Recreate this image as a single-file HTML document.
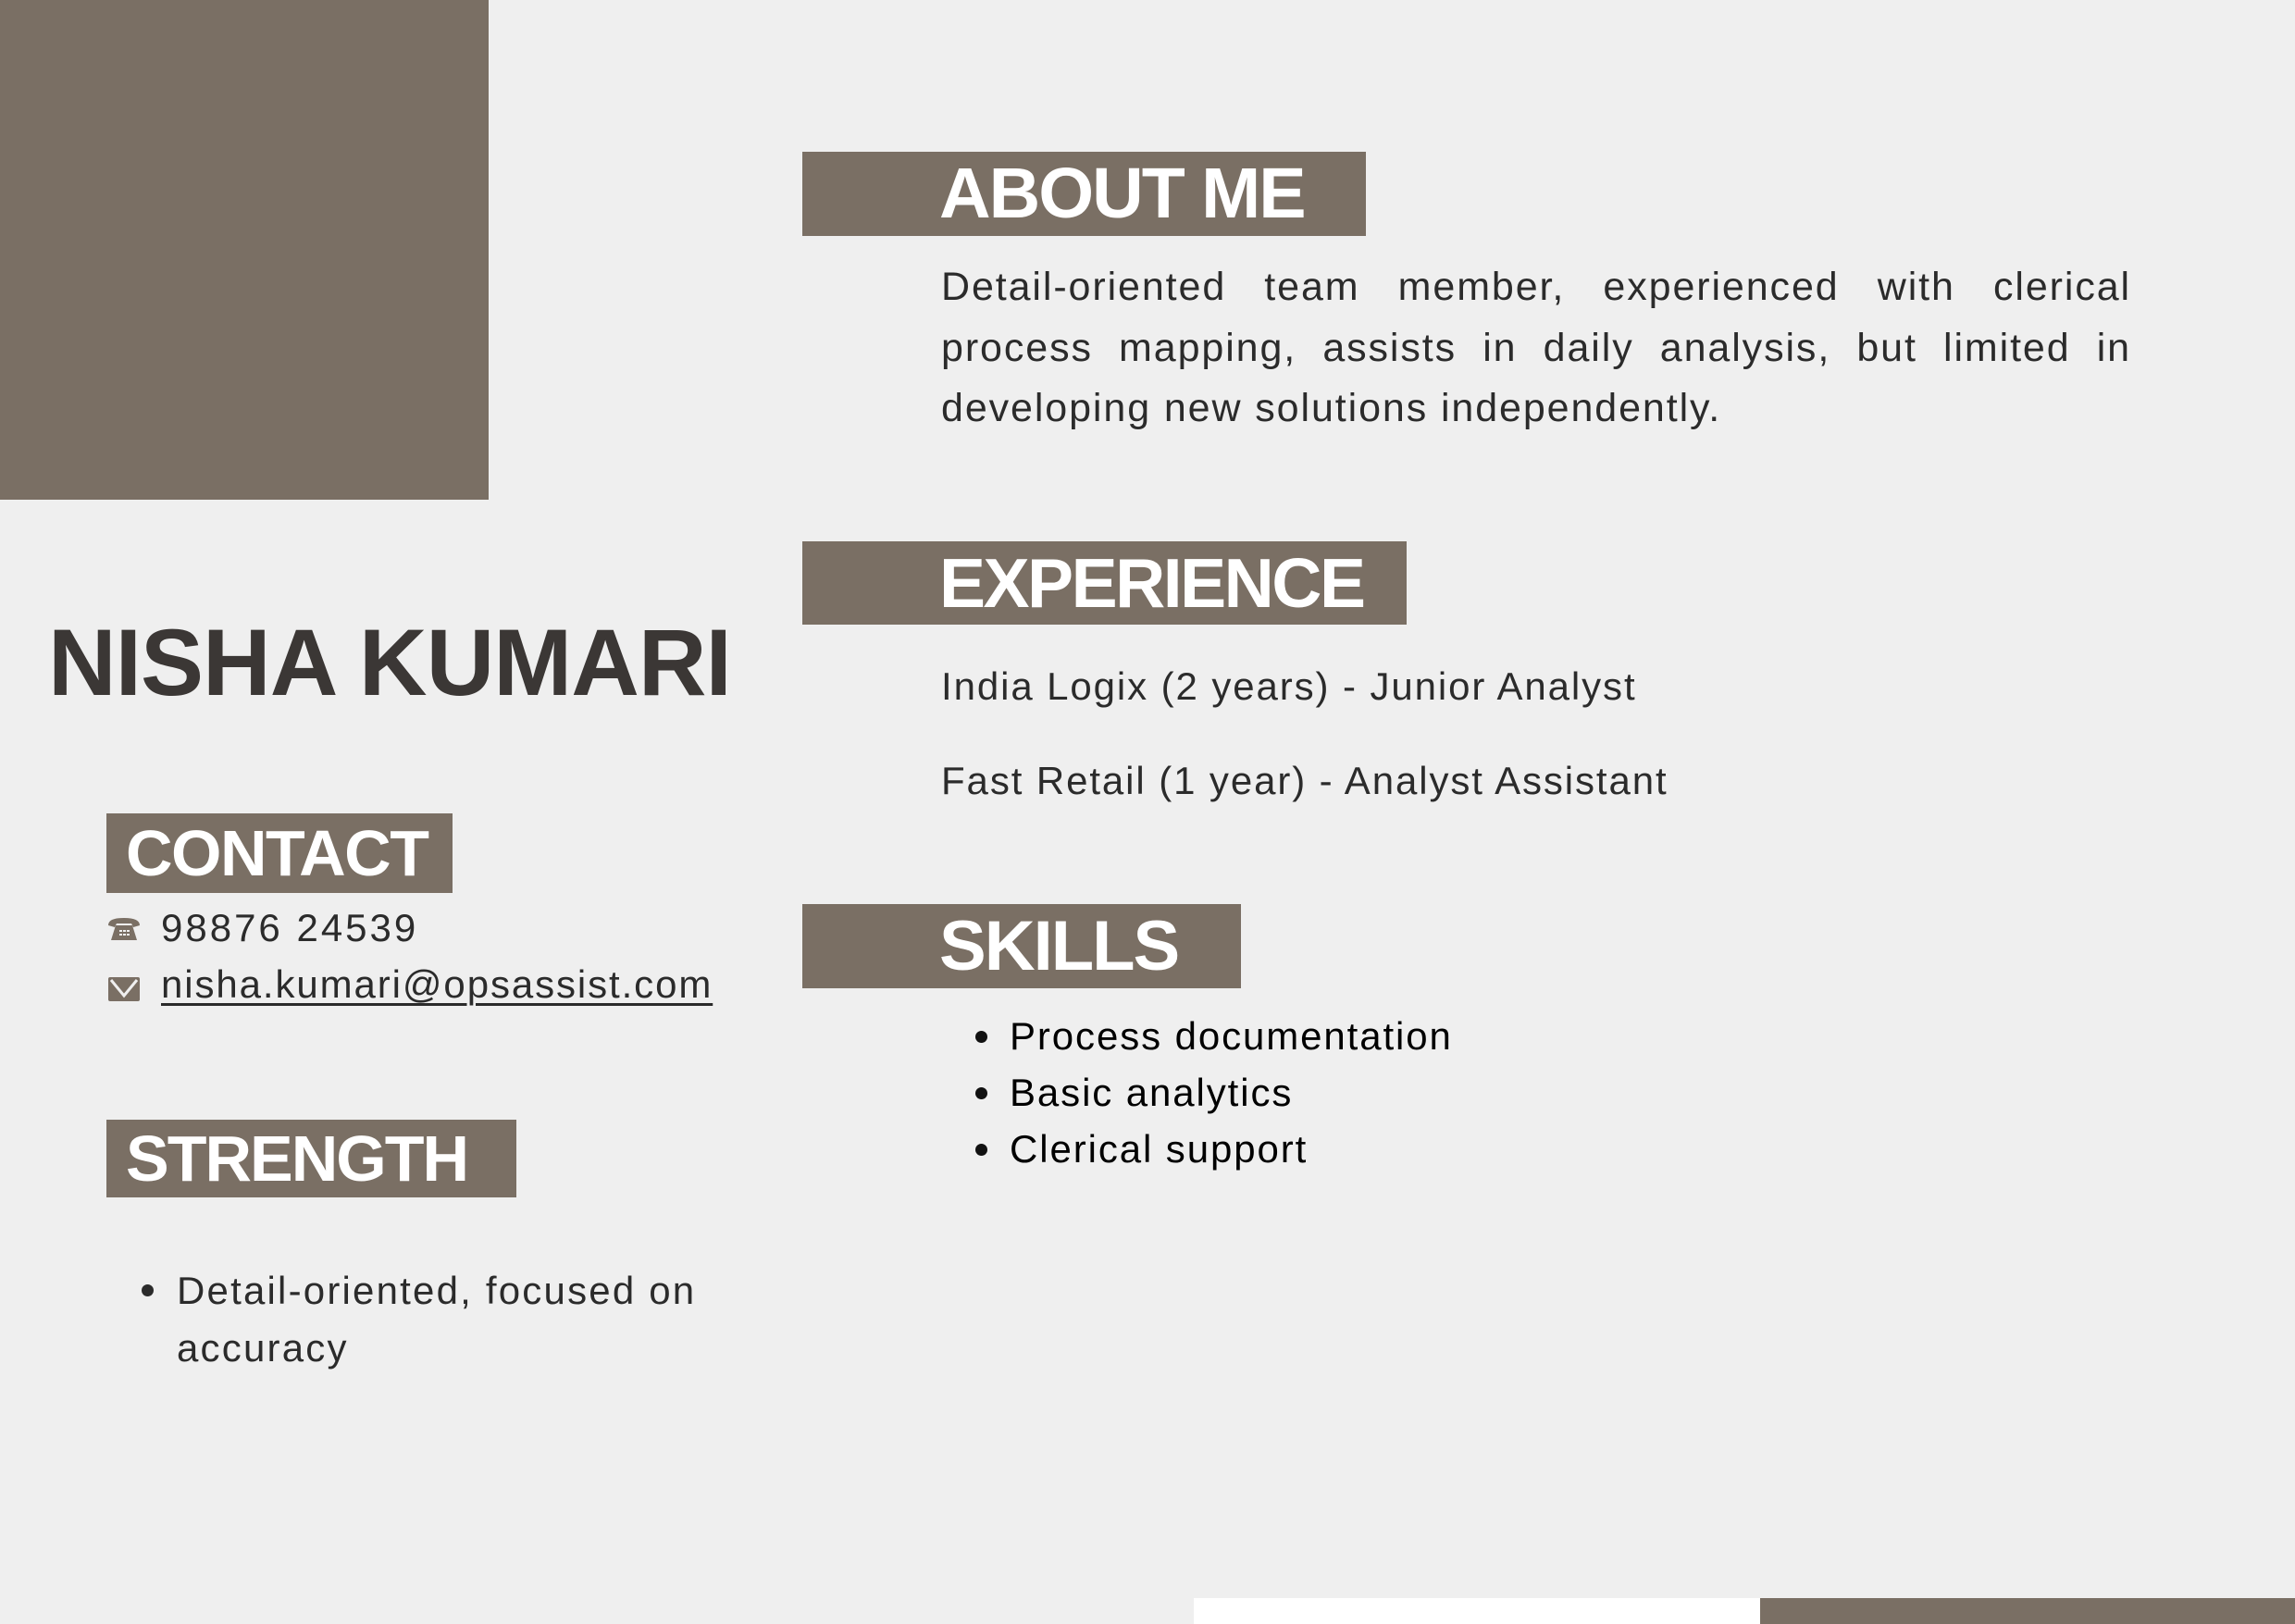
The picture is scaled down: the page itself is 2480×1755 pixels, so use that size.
<!DOCTYPE html>
<html><head><meta charset="utf-8"><style>
*{margin:0;padding:0;box-sizing:border-box}
body{width:2480px;height:1755px;background:#efefef;position:relative;overflow:hidden;font-family:"Liberation Sans",sans-serif;color:#2b2b2b}
.a{position:absolute}
.br{background:#7a6f64}
.h{position:absolute;background:#7a6f64;color:#fff;font-weight:bold;white-space:nowrap;display:flex;align-items:center;letter-spacing:-2px}
.t{position:absolute;white-space:nowrap;font-size:42px;line-height:50px;letter-spacing:1.9px}
.dot{position:absolute;width:13px;height:13px;border-radius:50%;background:#111}
</style></head><body>
<div class="a br" style="left:0;top:0;width:528px;height:540px"></div>

<div class="h" style="left:867px;top:164px;width:609px;height:91px;padding-left:148px;font-size:77px">ABOUT ME</div>
<div class="a" style="left:1017px;top:278px;width:1286px;font-size:43px;line-height:65.5px;text-align:justify;color:#2b2b2b;letter-spacing:1.9px">Detail-oriented team member, experienced with clerical process mapping, assists in daily analysis, but limited in developing new solutions independently.</div>

<div class="h" style="left:867px;top:585px;width:653px;height:90px;padding-left:148px;font-size:75px;letter-spacing:-2.5px">EXPERIENCE</div>
<div class="t" style="left:1017px;top:717px">India Logix (2 years) - Junior Analyst</div>
<div class="t" style="left:1017px;top:819px">Fast Retail (1 year) - Analyst Assistant</div>

<div class="h" style="left:867px;top:977px;width:474px;height:91px;padding-left:148px;font-size:76px;letter-spacing:-2px">SKILLS</div>
<div class="dot" style="left:1054px;top:1114px"></div>
<div class="t" style="left:1091px;top:1095px;color:#000">Process documentation</div>
<div class="dot" style="left:1054px;top:1175px"></div>
<div class="t" style="left:1091px;top:1156px;color:#000">Basic analytics</div>
<div class="dot" style="left:1054px;top:1236px"></div>
<div class="t" style="left:1091px;top:1217px;color:#000">Clerical support</div>

<div class="a" style="left:52px;top:660px;font-size:102px;line-height:112px;font-weight:bold;color:#3b3735;letter-spacing:-1px;white-space:nowrap">NISHA KUMARI</div>

<div class="h" style="left:115px;top:879px;width:374px;height:86px;padding-left:21px;font-size:70px;letter-spacing:-1.5px">CONTACT</div>
<svg class="a" style="left:115px;top:990px" width="38" height="28" viewBox="0 0 38 28"><path d="M2 10 Q2 2 19 2 Q36 2 36 10 L29 12 L27 8 L11 8 L9 12 Z" fill="#7a6f64"/><path d="M10 10 L28 10 L33 26 L5 26 Z" fill="#7a6f64"/><g fill="#efefef"><rect x="14" y="15" width="3" height="2"/><rect x="18" y="15" width="3" height="2"/><rect x="22" y="15" width="3" height="2"/><rect x="14" y="19" width="3" height="2"/><rect x="18" y="19" width="3" height="2"/><rect x="22" y="19" width="3" height="2"/></g></svg>
<div class="t" style="left:174px;top:978px;color:#2b2b2b;letter-spacing:3px">98876 24539</div>
<svg class="a" style="left:117px;top:1056px" width="34" height="26" viewBox="0 0 34 26"><rect width="34" height="26" rx="2" fill="#7a6f64"/><path d="M3 3 L17 20 L31 3" stroke="#efefef" stroke-width="3" fill="none"/></svg>
<div class="t" style="left:174px;top:1039px;text-decoration:underline;text-decoration-thickness:3px;text-underline-offset:6px">nisha.kumari@opsassist.com</div>

<div class="h" style="left:115px;top:1210px;width:443px;height:84px;padding-left:21px;font-size:70px;letter-spacing:-2px">STRENGTH</div>
<div class="dot" style="left:153px;top:1388px;background:#2b2b2b"></div>
<div class="a" style="left:191px;top:1364px;font-size:42px;line-height:62px;width:620px;letter-spacing:2.2px">Detail-oriented, focused on<br>accuracy</div>

<div class="a" style="left:1290px;top:1727px;width:612px;height:28px;background:#fff"></div>
<div class="a br" style="left:1902px;top:1727px;width:578px;height:28px"></div>
</body></html>
